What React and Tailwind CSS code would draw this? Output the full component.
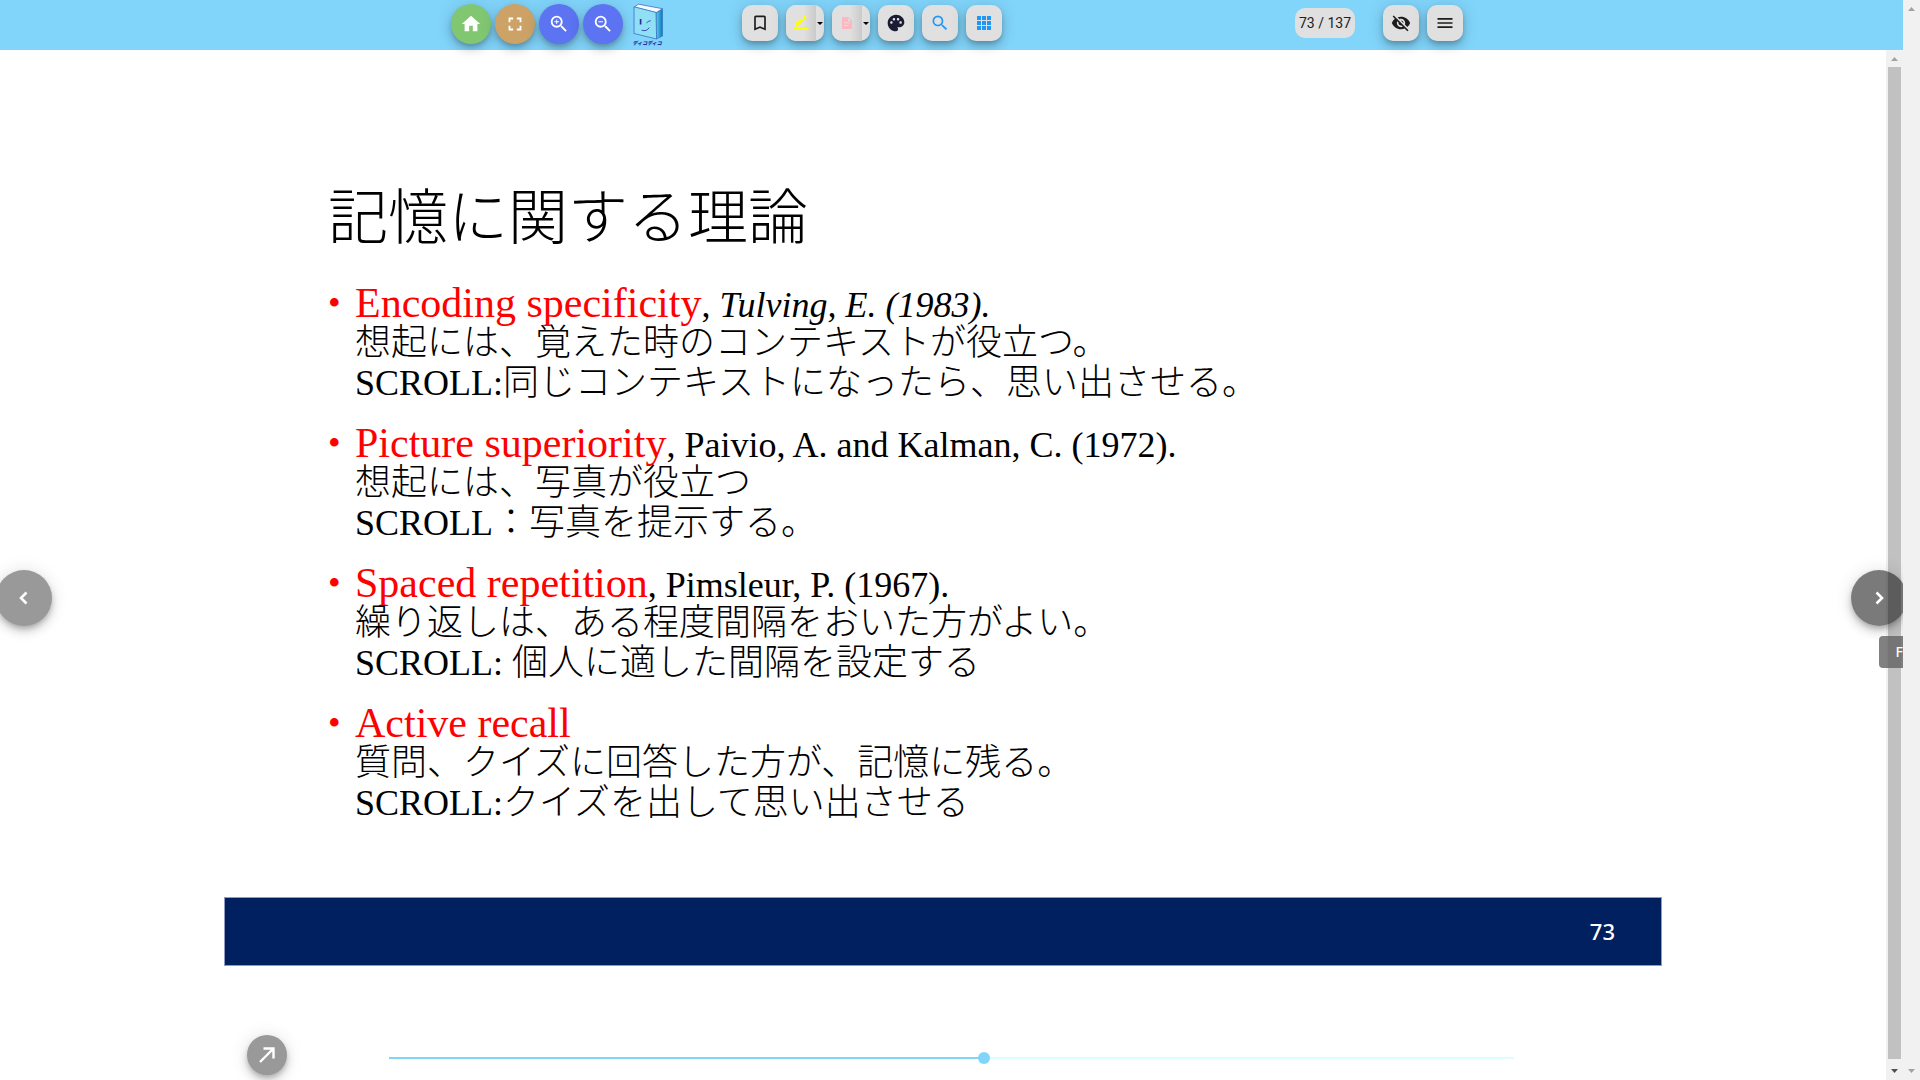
import React from "react";
import {
  MdHome, MdFullscreen, MdZoomIn, MdZoomOut, MdBookmarkBorder,
  MdPalette, MdSearch, MdVisibilityOff, MdMenu,
} from "react-icons/md";

const raised = "shadow-[0_3px_5px_-1px_rgba(0,0,0,0.2),0_6px_10px_rgba(0,0,0,0.14),0_1px_18px_rgba(0,0,0,0.12)]";

function Round({ label, color, children }) {
  return (
    <button aria-label={label} className={`flex size-10 items-center justify-center rounded-full text-[22px] text-white ${raised} ${color}`}>
      {children}
    </button>
  );
}

function Tool({ label, color = "text-[#1c1c1c]", children }) {
  return (
    <button aria-label={label} className={`flex size-9 items-center justify-center rounded-[10px] bg-[#e0e0e0] text-xl ${raised} ${color}`}>
      {children}
    </button>
  );
}

function SplitTool({ label, children }) {
  return (
    <div className={`flex h-9 overflow-hidden rounded-[10px] bg-[#e0e0e0] ${raised}`}>
      <button aria-label={label} className="flex w-[30px] items-center justify-center bg-linear-to-r from-[#e0e0e0] from-60% to-[#cacaca]">
        {children}
      </button>
      <button aria-label={`${label} options`} className="flex w-2 items-center justify-center text-black">
        <svg viewBox="0 0 6 3" className="h-[3px] w-1.5" fill="currentColor"><path d="M0 0h6L3 3z" /></svg>
      </button>
    </div>
  );
}

function Marker() {
  return (
    <svg viewBox="0 0 16 16" className="size-4" fill="yellow">
      <path d="M2 8.600 8.400 3.200l2.400 2.400L4.600 11.600H2z" />
      <path d="m9.200 2.500 1.700-1.600q.6-.5 1.200 0l1.300 1.300q.5.6 0 1.100l-1.800 1.600z" />
      <path d="M.5 13h15v2H.5z" />
    </svg>
  );
}

function GridIcon() {
  return (
    <svg viewBox="0 0 14 14" className="size-[14px]" fill="#2196f3">
      {[0, 5, 10].map((y) => [0, 5, 10].map((x) => <rect key={`${x}-${y}`} x={x} y={y} width="4" height="4" />))}
    </svg>
  );
}

function Chevron({ d }) {
  return (
    <svg viewBox="0 0 24 24" className="size-6" fill="none" stroke="currentColor" strokeWidth="2.600"><path d={d} /></svg>
  );
}

function Logo() {
  return (
    <svg viewBox="0 0 32 44" className="h-11 w-8" role="img" aria-label="ディコディコ">
      <defs>
        <linearGradient id="spine" x1="0" x2="1">
          <stop offset="0" stopColor="#5fd0ea" />
          <stop offset="1" stopColor="#0878b8" />
        </linearGradient>
      </defs>
      <path d="M24 9.500 30.500 6v27L24.500 36z" fill="url(#spine)" stroke="#2a6fc0" strokeWidth=".6" />
      <path d="M2.200 4 6.500 1.200l24 4.500-6.500 4z" fill="#f4fbff" stroke="#3b5fb5" strokeWidth=".7" />
      <path d="M2 3.800 24 9.400l.6 26.600L2 30.500z" fill="#90e0f5" stroke="#3b6fc5" strokeWidth=".8" />
      <path d="M8.600 16v5.500" stroke="#2a2c9a" strokeWidth="1.700" />
      <path d="M14.500 20q1.500-2 4.200-2.300M9.600 27.200q5 1.700 7.600-2.600" fill="none" stroke="#3340a8" strokeWidth=".9" />
      <text x="0.500" y="41.500" fontSize="5" fontWeight="900" fontStyle="italic" fill="#2b2f9e" fontFamily="'Noto Sans CJK JP', sans-serif">ディコディコ</text>
    </svg>
  );
}

function Scrollbar({ thumb }) {
  return (
    <div aria-hidden="true" className="flex w-[17px] shrink-0 flex-col items-center bg-[#f1f1f1]">
      <svg viewBox="0 0 17 17" className="size-[17px] shrink-0" fill="#a3a3a3"><path d="M5 11h7L8.500 7z" /></svg>
      <div className={thumb ? "w-[13px] flex-1 bg-[#c1c1c1]" : "flex-1"} />
      <svg viewBox="0 0 17 21" className="h-[21px] w-[17px] shrink-0" fill={thumb ? "#505050" : "#a3a3a3"}><path d="M5 10h7l-3.500 4z" /></svg>
    </div>
  );
}

const topics = [
  { name: "Encoding specificity", cite: "Tulving, E. (1983).", italic: true, lines: ["想起には、覚えた時のコンテキストが役立つ。", "SCROLL:同じコンテキストになったら、思い出させる。"] },
  { name: "Picture superiority", cite: "Paivio, A. and Kalman, C. (1972).", lines: ["想起には、写真が役立つ", "SCROLL：写真を提示する。"] },
  { name: "Spaced repetition", cite: "Pimsleur, P. (1967).", lines: ["繰り返しは、ある程度間隔をおいた方がよい。", "SCROLL: 個人に適した間隔を設定する"] },
  { name: "Active recall", lines: ["質問、クイズに回答した方が、記憶に残る。", "SCROLL:クイズを出して思い出させる"] },
];

function Slide() {
  return (
    <article lang="ja" className="font-['Liberation_Serif','Noto_Sans_CJK_JP',serif] font-light text-black">
      <div className="pl-[104px]">
        <h1 className="text-[60px] leading-[60px]">記憶に関する理論</h1>
        <ul className="mt-[34px] flex flex-col gap-5 text-[36px] leading-10">
          {topics.map((t) => (
            <li key={t.name} className="flex whitespace-nowrap">
              <span aria-hidden="true" className="w-[27px] text-[#f00]">•</span>
              <div>
                <h2 className="h-10">
                  <span className="text-[42px] text-[#f00]">{t.name}</span>
                  {t.cite && <>, <span className={t.italic ? "italic" : ""}>{t.cite}</span></>}
                </h2>
                {t.lines.map((l) => <p key={l} className="h-10">{l}</p>)}
              </div>
            </li>
          ))}
        </ul>
      </div>
      <footer className="mt-[74px] flex h-[69px] items-center justify-end border border-[#8f9cc0] bg-[#002060] pr-[46px] font-['Noto_Sans',sans-serif] text-[22px] font-medium text-white">
        73
      </footer>
    </article>
  );
}

export default function App() {
  return (
    <div className="flex h-screen bg-white font-[Roboto,sans-serif]">
      <div className="relative flex min-w-0 flex-1 flex-col overflow-hidden">
        <header className="h-[50px] shrink-0 bg-[#81d4fa]">
          <div className="mx-auto flex max-w-[1023px] items-start pl-[11px]">
            <div className="flex gap-1 pt-1">
              <Round label="Home" color="bg-[#81c772]"><MdHome /></Round>
              <Round label="Full screen" color="bg-[#cca266]"><MdFullscreen /></Round>
              <Round label="Zoom in" color="bg-[#5c73f2]"><MdZoomIn /></Round>
              <Round label="Zoom out" color="bg-[#5c73f2]"><MdZoomOut /></Round>
            </div>
            <a href="#" className="ml-[9px] mt-[3px]"><Logo /></a>
            <div className="ml-[78px] flex gap-2 pt-[5px]">
              <Tool label="Bookmark"><MdBookmarkBorder /></Tool>
              <SplitTool label="Marker"><Marker /></SplitTool>
              <SplitTool label="Memo">
                <svg viewBox="0 0 10 12" className="h-3 w-2.5" fill="#ffb6c1"><path fillRule="evenodd" d="M1 0h5.500L10 3.500V11q0 1-1 1H1q-1 0-1-1V1q0-1 1-1zM2 5.200v1h6v-1zM2 8v1h4.500V8zM6 1v3h3z" /></svg>
              </SplitTool>
              <Tool label="Palette" color="text-[#1b1b33]"><MdPalette /></Tool>
              <Tool label="Search" color="text-[#2196f3]"><MdSearch /></Tool>
              <Tool label="Thumbnails"><GridIcon /></Tool>
            </div>
            <div className="ml-auto mt-2 flex h-[30px] w-[60px] items-center justify-center rounded-[10px] bg-[#e0e0e0] text-sm text-[#212121]">73 / 137</div>
            <div className="ml-7 flex gap-2 pt-[5px]">
              <Tool label="Hide"><MdVisibilityOff /></Tool>
              <Tool label="Menu"><MdMenu /></Tool>
            </div>
          </div>
        </header>

        <div className="flex min-h-0 flex-1">
          <main className="min-w-0 flex-1 overflow-hidden pt-[139px]">
            <div className="mx-auto max-w-[1438px]">
              <Slide />
              <div className="mt-[69px] flex items-center pl-[23px] pr-[148px]">
                <button aria-label="Open" className={`flex size-10 shrink-0 items-center justify-center rounded-full bg-[#999] text-white ${raised}`}>
                  <svg viewBox="0 0 24 24" className="size-6" fill="none" stroke="currentColor" strokeWidth="2.400"><path d="M5 19 18 6M8.500 5.500h10v10" /></svg>
                </button>
                <input
                  type="range" min="1" max="137" defaultValue="73" aria-label="Page"
                  className="ml-[102px] mt-1.5 h-0.5 min-w-0 flex-1 appearance-none bg-linear-to-r from-[#81d4fa] from-53% to-[#d9ffff] to-53% [&::-webkit-slider-thumb]:size-3 [&::-webkit-slider-thumb]:appearance-none [&::-webkit-slider-thumb]:rounded-full [&::-webkit-slider-thumb]:bg-[#81d4fa]"
                />
              </div>
            </div>
          </main>
          <Scrollbar thumb />
        </div>

        <button aria-label="Back" className={`absolute -left-1 top-[570px] flex size-14 items-center justify-center rounded-full bg-[#999] text-white ${raised}`}>
          <Chevron d="m14.500 6.500-5.500 5.500 5.500 5.500" />
        </button>
        <button aria-label="Next" className={`absolute -right-1 top-[570px] flex size-14 items-center justify-center rounded-full bg-black/52 text-white ${raised}`}>
          <Chevron d="m9.500 6.500 5.500 5.500-5.500 5.500" />
        </button>
        <div role="tooltip" className="absolute right-0 top-[636px] flex h-8 w-6 items-center justify-end overflow-hidden rounded-l bg-[#616161]/80 font-['Noto_Sans',sans-serif] text-sm font-medium text-white">F</div>
      </div>
      <Scrollbar />
    </div>
  );
}
